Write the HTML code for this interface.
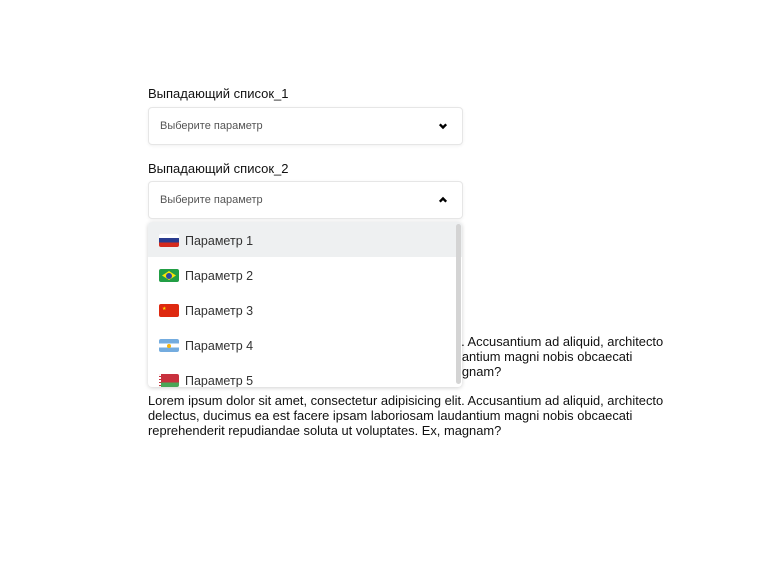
<!DOCTYPE html>
<html><head><meta charset="utf-8"><style>
*{box-sizing:border-box;margin:0;padding:0}
body{width:782px;height:568px;background:#fff;font-family:"Liberation Sans",sans-serif;position:relative;overflow:hidden}
.lbl{position:absolute;left:148px;font-size:13px;color:#111}
.sel{position:absolute;left:148px;width:315px;height:38px;border:1px solid #e6e6e6;border-radius:4px;box-shadow:0 1px 3px rgba(0,0,0,.06);background:#fff}
.sel span{position:absolute;left:11px;top:12px;font-size:11px;color:#555}
.sel svg{position:absolute;right:14px;top:14px}
.txt{position:absolute;left:148px;width:540px;font-size:12.9px;line-height:15px;color:#111}
.list{position:absolute;left:148px;top:222px;width:314px;height:165px;background:#fff;border-radius:4px;box-shadow:0 1px 4px rgba(0,0,0,.18);overflow:hidden}
.it{height:35px;position:relative;font-size:12.5px;color:#333}
.it.a{background:#eef0f1}
.it span{position:absolute;left:37px;top:12px}
.it .f{position:absolute;left:11px;top:12px;width:20px;height:13px;border-radius:2px;overflow:hidden}
.sb{position:absolute;right:1px;top:2px;width:5px;height:160px;background:#d4d4d4;border-radius:3px}
</style></head><body>
<div class="lbl" style="top:86px">Выпадающий список_1</div>
<div class="sel" style="top:107px"><span>Выберите параметр</span><svg width="10" height="8" viewBox="0 0 10 8"><path d="M1.8 2.3L5 5.5L8.2 2.3" stroke="#000" stroke-width="2.4" fill="none"/></svg></div>
<div class="lbl" style="top:161px">Выпадающий список_2</div>
<div class="sel" style="top:181px"><span>Выберите параметр</span><svg width="10" height="8" viewBox="0 0 10 8"><path d="M1.8 5.7L5 2.5L8.2 5.7" stroke="#000" stroke-width="2.4" fill="none"/></svg></div>
<div class="txt" style="top:334px">Lorem ipsum dolor sit amet, consectetur adipisicing elit. Accusantium ad aliquid, architecto delectus, ducimus ea est facere ipsam laboriosam laudantium magni nobis obcaecati reprehenderit repudiandae soluta ut voluptates. Ex, magnam?</div>
<div class="txt" style="top:393px">Lorem ipsum dolor sit amet, consectetur adipisicing elit. Accusantium ad aliquid, architecto delectus, ducimus ea est facere ipsam laboriosam laudantium magni nobis obcaecati reprehenderit repudiandae soluta ut voluptates. Ex, magnam?</div>
<div class="list">
<div class="it a"><div class="f" style="background:linear-gradient(#fff 0 30%,#2a3c8f 30% 65%,#d52b1e 65%)"></div><span>Параметр 1</span></div>
<div class="it"><div class="f" style="background:#229e45"><div style="position:absolute;left:3px;top:2px;width:14px;height:9px;background:#f8e509;clip-path:polygon(50% 0,100% 50%,50% 100%,0 50%)"></div><div style="position:absolute;left:7px;top:3.5px;width:6px;height:6px;border-radius:50%;background:#2b49a3"></div></div><span>Параметр 2</span></div>
<div class="it"><div class="f" style="background:#de2910"><div style="position:absolute;left:3px;top:2px;color:#ffde00;font-size:5px">★</div></div><span>Параметр 3</span></div>
<div class="it"><div class="f" style="background:linear-gradient(#74acdf 0 33%,#fff 33% 66%,#74acdf 66%)"><div style="position:absolute;left:8px;top:5px;width:4px;height:4px;border-radius:50%;background:#f6b40e"></div></div><span>Параметр 4</span></div>
<div class="it"><div class="f" style="background:linear-gradient(#c8313e 0 66%,#4aa657 66%)"><div style="position:absolute;left:0;top:0;width:2px;height:13px;background:repeating-linear-gradient(#fff 0 2px,#c8313e 2px 3px)"></div></div><span>Параметр 5</span></div>
<div class="sb"></div>
</div>
</body></html>
